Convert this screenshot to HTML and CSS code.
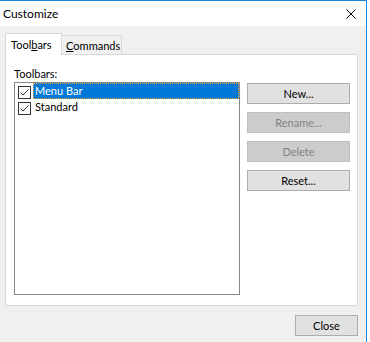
FILE: index.html
```html
<!doctype html>
<html lang="en">
  <head>
    <meta charset="UTF-8" />
    <meta name="viewport" content="width=device-width, initial-scale=1.0" />
    <title>Customize</title>
    <link rel="stylesheet" href="styles.css">
  </head>
  <body>
    <div class="window">
      <div class="titlebar">
        <span class="title">Customize</span>
        <span class="close-x">
          <svg width="10" height="10" viewBox="0 0 10 10">
            <path d="M0.5 0.5 L9.5 9.5 M9.5 0.5 L0.5 9.5" stroke="#000" stroke-width="1" fill="none" />
          </svg>
        </span>
      </div>

      <div class="client">
        <div class="tabs">
          <div class="tab active">Tool<u>b</u>ars</div>
          <div class="tab"><u>C</u>ommands</div>
        </div>

        <div class="panel">
          <div class="list-col">
            <div class="label">Toolbars:</div>
            <div class="listbox">
              <div class="item">
                <svg class="check" width="13" height="13" viewBox="0 0 13 13">
                  <rect x="0.5" y="0.5" width="12" height="12" fill="#fff" stroke="#333" />
                  <path d="M2.5 6.5 L5 9 L10.5 3.5" stroke="#333" stroke-width="1" fill="none" />
                </svg>
                <span class="item-text selected">Menu Bar</span>
              </div>
              <div class="item">
                <svg class="check" width="13" height="13" viewBox="0 0 13 13">
                  <rect x="0.5" y="0.5" width="12" height="12" fill="#fff" stroke="#333" />
                  <path d="M2.5 6.5 L5 9 L10.5 3.5" stroke="#333" stroke-width="1" fill="none" />
                </svg>
                <span class="item-text">Standard</span>
              </div>
            </div>
          </div>

          <div class="btn-col">
            <button class="btn">New...</button>
            <button class="btn" disabled>Rename...</button>
            <button class="btn" disabled>Delete</button>
            <button class="btn">Reset...</button>
          </div>
        </div>

        <div class="footer">
          <button class="btn close-btn">Close</button>
        </div>
      </div>
    </div>
  </body>
</html>
```

FILE: styles.css
```css
* {
  box-sizing: border-box;
}
body {
  margin: 0;
  background-color: #fff;
  font-family: 'Segoe UI', Lato, 'Noto Sans', sans-serif;
  font-size: 11px;
  color: #000;
}
.window {
  width: 367px;
  height: 342px;
  border-top: 1px solid #1883d7;
  border-right: 1px solid #1883d7;
  background-color: #f0f0f0;
  display: flex;
  flex-direction: column;
}
.titlebar {
  height: 25px;
  background-color: #fff;
  display: flex;
  align-items: center;
  justify-content: space-between;
  padding-left: 3px;
}
.title {
  font-size: 12px;
}
.close-x {
  display: flex;
  margin-right: 10px;
}
.client {
  flex-grow: 1;
  padding: 7px 8px 0 5px;
  display: flex;
  flex-direction: column;
}
.tabs {
  height: 21px;
  display: flex;
  align-items: flex-end;
}
.tab {
  height: 19px;
  width: 60px;
  padding-left: 4px;
  display: flex;
  align-items: center;
  border: 1px solid #d9d9d9;
  border-left: none;
  border-bottom: none;
  background-color: #f0f0f0;
}
.tab.active {
  height: 22px;
  width: 57px;
  padding-left: 5px;
  padding-bottom: 1px;
  margin-bottom: -1px;
  border-left: 1px solid #d9d9d9;
  background-color: #fff;
  position: relative;
  z-index: 1;
}
.panel {
  height: 252px;
  border: 1px solid #d9d9d9;
  background-color: #fff;
  display: flex;
  padding: 11px 7px 0 8px;
}
.list-col {
  width: 226px;
  display: flex;
  flex-direction: column;
}
.label {
  height: 16px;
  line-height: 16px;
}
.listbox {
  height: 213px;
  border: 1px solid #828790;
}
.item {
  height: 16px;
  display: flex;
}
.check {
  align-self: flex-end;
  margin-left: 3px;
  flex-shrink: 0;
}
.item-text {
  flex-grow: 1;
  margin-left: 2px;
  padding-left: 1px;
  line-height: 14px;
  border: 1px dotted transparent;
}
.item-text.selected {
  background-color: #0078d7;
  border-color: #f3a33b;
  color: #fff;
}
.btn-col {
  margin-left: 7px;
  padding-top: 17px;
  display: flex;
  flex-direction: column;
  gap: 8px;
}
.btn {
  width: 103px;
  height: 21px;
  padding: 0;
  font: inherit;
  color: #000;
  background-color: #e1e1e1;
  border: 1px solid #adadad;
}
.btn:disabled {
  background-color: #cccccc;
  border-color: #bfbfbf;
  color: #838383;
}
.footer {
  display: flex;
  justify-content: flex-end;
  padding-top: 9px;
}
.close-btn {
  width: 63px;
}
```
